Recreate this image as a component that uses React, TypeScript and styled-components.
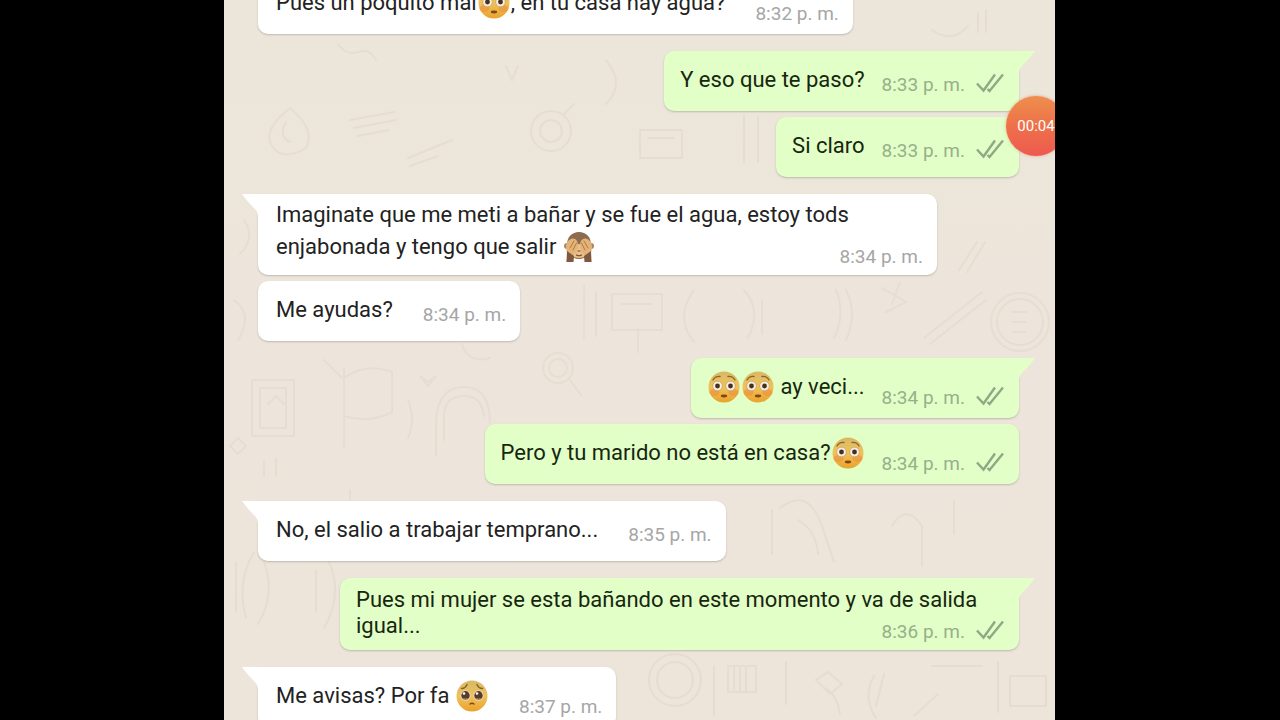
import React from "react";
import styled, { createGlobalStyle } from "styled-components";

const GlobalStyle = createGlobalStyle`
  * { box-sizing: border-box; }
  body {
    margin: 0;
    background: #000;
    font-family: Roboto, "Liberation Sans", sans-serif;
  }
`;

type Side = "in" | "out";
type Kind = "plain" | "emoji" | "emojiLong" | "long";

const textSpacing: Record<Kind, { top: number; bottom: number; line: number; meta: number }> = {
  plain: { top: 16, bottom: 18, line: 26, meta: 16 },
  emoji: { top: 13, bottom: 15, line: 32, meta: 10 },
  emojiLong: { top: 5, bottom: 12, line: 32, meta: 8 },
  long: { top: 9, bottom: 11, line: 26, meta: 8 },
};

const Page = styled.div`
  display: flex;
  height: 100vh;
  padding: 0 225px 0 224px;
  overflow: hidden;
`;

const Screen = styled.main`
  position: relative;
  flex: 1;
  min-width: 0;
  overflow: hidden;
  background: linear-gradient(#ece6da, #ede5db 45%, #ede4da);
`;

const Wallpaper = styled.svg`
  position: absolute;
  inset: 0;
  width: 100%;
  height: 100%;
  fill: none;
  stroke: #b49a90;
  stroke-width: 2;
  stroke-linecap: round;
  opacity: 0.1;
`;

const Messages = styled.ol`
  position: relative;
  display: flex;
  flex-direction: column;
  list-style: none;
  margin: -26px 0 0;
  padding: 0 36px 0 34px;
`;

const Row = styled.li<{ $side: Side; $first: boolean }>`
  display: flex;
  justify-content: ${(p) => (p.$side === "out" ? "flex-end" : "flex-start")};
  margin-top: ${(p) => (p.$first ? 17 : 6)}px;
  &:first-child { margin-top: 0; }
`;

const Bubble = styled.div<{ $side: Side; $tail: boolean; $stacked: boolean }>`
  position: relative;
  display: grid;
  grid-template-columns: ${(p) => (p.$stacked ? "1fr" : "auto auto")};
  column-gap: ${(p) => (p.$side === "out" ? 17 : 30)}px;
  max-width: 679px;
  padding: ${(p) => (p.$side === "out" ? "0 15px 0 16px" : "0 14px 0 18px")};
  border-radius: 10px;
  ${(p) => p.$tail && (p.$side === "out" ? "border-top-right-radius: 0;" : "border-top-left-radius: 0;")}
  background: ${(p) => (p.$side === "out" ? "#e1ffc7" : "#fff")};
  box-shadow: 0 1px 2px rgba(70, 70, 60, 0.28);
`;

const Tail = styled.svg<{ $side: Side }>`
  position: absolute;
  top: 0;
  ${(p) => (p.$side === "out" ? "right: -16px;" : "left: -16px;")}
  width: 17px;
  height: 24px;
  transform: ${(p) => (p.$side === "out" ? "scaleX(-1)" : "none")};
  fill: ${(p) => (p.$side === "out" ? "#e1ffc7" : "#fff")};
`;

const Text = styled.p<{ $kind: Kind; $side: Side }>`
  grid-area: 1 / 1;
  margin: 0;
  padding: ${(p) => textSpacing[p.$kind].top}px 0 ${(p) => textSpacing[p.$kind].bottom}px;
  font-size: 22px;
  line-height: ${(p) => textSpacing[p.$kind].line}px;
  color: ${(p) => (p.$side === "out" ? "#18260f" : "#222")};
`;

const Meta = styled.div<{ $kind: Kind; $side: Side; $stacked: boolean }>`
  display: flex;
  align-items: flex-end;
  gap: 11px;
  align-self: end;
  justify-self: end;
  grid-area: ${(p) => (p.$stacked ? "1 / 1" : "1 / 2")};
  padding-bottom: ${(p) => textSpacing[p.$kind].meta}px;
  font-size: 19px;
  line-height: 20px;
  white-space: nowrap;
  color: ${(p) => (p.$side === "out" ? "#98b08a" : "#a6a6a6")};
`;

const TickIcon = styled.svg`
  display: block;
  width: 28px;
  height: 22px;
  fill: none;
  stroke: #8fa985;
  stroke-width: 2.4;
`;

const EmojiIcon = styled.svg`
  display: inline-block;
  width: 32px;
  height: 32px;
  margin: -2px 1px;
  vertical-align: -7px;
`;

const Recorder = styled.button`
  position: absolute;
  top: 96px;
  right: -11px;
  width: 60px;
  height: 60px;
  padding: 0;
  border: 0;
  border-radius: 50%;
  background: linear-gradient(#ee8f4e, #ee7049 50%, #ee5a50);
  box-shadow: 0 0 3px rgba(226, 110, 70, 0.6);
  color: #fff;
  font: 15px/60px Roboto, "Liberation Sans", sans-serif;
  text-align: center;
`;

function FaceGradient({ id }: { id: string }) {
  return (
    <defs>
      <linearGradient id={id} x1="0" y1="0" x2="0" y2="1">
        <stop offset="0" stopColor="#d8b968" />
        <stop offset="0.5" stopColor="#efc25a" />
        <stop offset="1" stopColor="#eba22c" />
      </linearGradient>
    </defs>
  );
}

function Flushed() {
  const id = React.useId();
  return (
    <EmojiIcon viewBox="0 0 32 32" role="img" aria-label="cara sonrojada">
      <FaceGradient id={id} />
      <circle cx="16" cy="16" r="15.5" fill={`url(#${id})`} />
      <ellipse cx="6.5" cy="21.5" rx="5" ry="3.5" fill="#ec8a3c" opacity="0.5" />
      <ellipse cx="25.5" cy="21.5" rx="5" ry="3.5" fill="#ec8a3c" opacity="0.5" />
      <path d="M5 9C6.500 6.500 9 5 12 5.500M27 9C25.500 6.500 23 5 20 5.500" fill="none" stroke="#8a6428" strokeWidth="1.400" strokeLinecap="round" />
      <circle cx="9.500" cy="15" r="4.800" fill="#f6eee2" stroke="#bd9550" strokeWidth="0.600" />
      <circle cx="22.500" cy="15" r="4.800" fill="#f6eee2" stroke="#bd9550" strokeWidth="0.600" />
      <circle cx="9.500" cy="15" r="2.400" fill="#49301e" />
      <circle cx="22.500" cy="15" r="2.400" fill="#49301e" />
      <ellipse cx="16" cy="25" rx="3.200" ry="1.400" fill="#7d4814" />
    </EmojiIcon>
  );
}

function Pleading() {
  const id = React.useId();
  return (
    <EmojiIcon viewBox="0 0 32 32" role="img" aria-label="cara suplicante">
      <FaceGradient id={id} />
      <circle cx="16" cy="16" r="15.500" fill={`url(#${id})`} />
      <path d="M5.500 8.500C8 8.500 10 7 11 4.500M26.500 8.500C24 8.500 22 7 21 4.500" fill="none" stroke="#86642c" strokeWidth="1.500" strokeLinecap="round" />
      <ellipse cx="9.500" cy="15.500" rx="5" ry="5.200" fill="#e9dbc3" />
      <ellipse cx="22.500" cy="15.500" rx="5" ry="5.200" fill="#e9dbc3" />
      <ellipse cx="9.500" cy="15.500" rx="4.200" ry="4.400" fill="#5a3b2a" />
      <ellipse cx="22.500" cy="15.500" rx="4.200" ry="4.400" fill="#5a3b2a" />
      <circle cx="8" cy="13.500" r="1.300" fill="#fff" />
      <circle cx="21" cy="13.500" r="1.300" fill="#fff" />
      <path d="M7.500 18.500Q9.500 20 11.500 18.500M20.500 18.500Q22.500 20 24.500 18.500" fill="none" stroke="#b99a86" strokeWidth="1.200" />
      <path d="M14 24Q16 22.500 18 24" fill="none" stroke="#7d4814" strokeWidth="1.500" strokeLinecap="round" />
    </EmojiIcon>
  );
}

function Monkey() {
  return (
    <EmojiIcon viewBox="0 0 32 32" role="img" aria-label="mono tapándose los ojos">
      <circle cx="4" cy="15" r="3" fill="#b08458" />
      <circle cx="28" cy="15" r="3" fill="#b08458" />
      <path d="M16 1C23 1 28 6 28 14C28 22 23 28 16 28C9 28 4 22 4 14C4 6 9 1 16 1Z" fill="#8d6b50" />
      <ellipse cx="16" cy="20" rx="9.500" ry="7" fill="#ecc28c" />
      <path d="M3 16C3 10 8 6 12 8C15 9.500 15.500 14 14.500 18C13.500 22 10.500 23 10 25L9.500 31H3.500C4 26 5 23 3.500 20Z" fill="#e3b479" />
      <path d="M29 16C29 10 24 6 20 8C17 9.500 16.500 14 17.500 18C18.500 22 21.500 23 22 25L22.500 31H28.500C28 26 27 23 28.500 20Z" fill="#e3b479" />
      <path d="M4 20L11 25L10.500 31H3.500ZM28 20L21 25L21.500 31H28.500Z" fill="#80583f" />
      <path d="M7 17L11 10M10 19L13.500 12M25 17L21 10M22 19L18.500 12" stroke="#b47a3e" strokeWidth="1" strokeLinecap="round" />
      <path d="M15 20H17M13.500 24Q16 25.500 18.500 24" stroke="#76482b" strokeWidth="1.200" fill="none" strokeLinecap="round" />
    </EmojiIcon>
  );
}

function Ticks() {
  return (
    <TickIcon viewBox="0 0 28 22" role="img" aria-label="entregado">
      <path d="M1 10.500L7.500 17.500L19 1.500M11.500 16L13.500 18L27 1.500" />
    </TickIcon>
  );
}

function Doodles() {
  return (
    <Wallpaper aria-hidden="true">
      <path d="M114 44q8 12 20 8t18 8M282 66l6 14 6-14M66 108q-28 22-18 38t34 2q10-18-16-40zM62 122q-8 14 4 20M126 120l44-8M130 128l42-8M134 136l30-6M184 158l44-18M186 166l28-10" />
      <circle cx="327" cy="131" r="20" />
      <circle cx="327" cy="131" r="11" />
      <path d="M340 114l10-10M382 60q20 24 0 44M416 130h42v28h-42zM424 138h26M520 116v46M534 116v46" />
      <path d="M708 30q20 14 36-4M754 12v20M762 10v22M735 270l18-28M743 272l18-30M20 220q12 18-4 34M10 300q20 14 4 40" />
      <circle cx="796" cy="322" r="29" />
      <circle cx="796" cy="322" r="23" />
      <path d="M788 312h14M788 322h14M788 332h14M700 338l58-46M706 344l56-44M658 288l24 14-20 10M676 282l-8 22" />
      <path d="M360 286v52M372 292v44M388 294h50v36h-50zM398 304h30M414 328v24M470 290q-20 28 0 52M520 290q18 20 4 48M538 300v34M612 290q10 24-2 48M622 290q12 24 0 50" />
      <path d="M28 380h42v56H28zM36 388h26v40H36zM44 404l8-8 8 8M120 368v80M120 378q22-16 48-6v40q-22 12-48 4M184 400q8 20 0 38M100 360l18 18M196 376l8 6 8-6-8 10zM212 455v-34q2-34 28-34t26 36M220 440v-26q2-18 20-18t20 20" />
      <circle cx="334" cy="368" r="15" />
      <circle cx="334" cy="368" r="9" />
      <path d="M345 379l12 16M238 344q6 20 28 14M14 438l8 8-8 8-8-8zM40 462v14M52 458v18M126 490v22" />
      <path d="M548 510v44M556 508q28-22 42 18l12 36M574 520q18 10 20 34M668 526q14-24 30 0v40M730 500v34M12 562v50M30 552q-18 30-8 66M40 562q12 32-6 62M92 570v42M104 560q16 34-4 68" />
      <circle cx="451" cy="680" r="26" />
      <circle cx="451" cy="680" r="18" />
      <path d="M490 666v50M504 666v26h28v-26zM510 666v26M516 666v26M522 666v26M562 662v42M592 680l12-8 14 12-12 10zM616 714q-4-22-16-26M650 676q-12 22 2 42M660 674l-8 32M690 716l24-22M708 666h50M774 662v50M786 676h36v30h-36z" />
    </Wallpaper>
  );
}

interface Message {
  side: Side;
  kind: Kind;
  time: string;
  first?: boolean;
  body: React.ReactNode;
}

const messages: Message[] = [
  { side: "in", kind: "emoji", time: "8:32 p. m.", body: <>Pues un poquito mal<Flushed />, en tu casa hay agua?</> },
  { side: "out", kind: "plain", time: "8:33 p. m.", first: true, body: "Y eso que te paso?" },
  { side: "out", kind: "plain", time: "8:33 p. m.", body: "Si claro" },
  {
    side: "in",
    kind: "emojiLong",
    time: "8:34 p. m.",
    first: true,
    body: <>Imaginate que me meti a bañar y se fue el agua, estoy tods enjabonada y tengo que salir <Monkey /></>,
  },
  { side: "in", kind: "plain", time: "8:34 p. m.", body: "Me ayudas?" },
  { side: "out", kind: "emoji", time: "8:34 p. m.", first: true, body: <><Flushed /><Flushed /> ay veci...</> },
  { side: "out", kind: "emoji", time: "8:34 p. m.", body: <>Pero y tu marido no está en casa?<Flushed /></> },
  { side: "in", kind: "plain", time: "8:35 p. m.", first: true, body: "No, el salio a trabajar temprano..." },
  {
    side: "out",
    kind: "long",
    time: "8:36 p. m.",
    first: true,
    body: "Pues mi mujer se esta bañando en este momento y va de salida igual...",
  },
  { side: "in", kind: "emoji", time: "8:37 p. m.", first: true, body: <>Me avisas? Por fa <Pleading /></> },
];

function MessageRow({ side, kind, time, first = false, body }: Message) {
  const stacked = kind === "long" || kind === "emojiLong";
  return (
    <Row $side={side} $first={first}>
      <Bubble $side={side} $tail={first} $stacked={stacked}>
        {first && (
          <Tail $side={side} viewBox="0 0 17 24" aria-hidden="true">
            <path d="M0 0H17V24H16C16 19 15 17 12 14Q4 6 0 0Z" />
          </Tail>
        )}
        <Text $kind={kind} $side={side}>{body}</Text>
        <Meta $kind={kind} $side={side} $stacked={stacked}>
          <time>{time}</time>
          {side === "out" && <Ticks />}
        </Meta>
      </Bubble>
    </Row>
  );
}

export default function App() {
  return (
    <>
      <GlobalStyle />
      <Page>
        <Screen>
          <Doodles />
          <Messages>
            {messages.map((message, index) => (
              <MessageRow key={index} {...message} />
            ))}
          </Messages>
          <Recorder type="button">00:04</Recorder>
        </Screen>
      </Page>
    </>
  );
}
